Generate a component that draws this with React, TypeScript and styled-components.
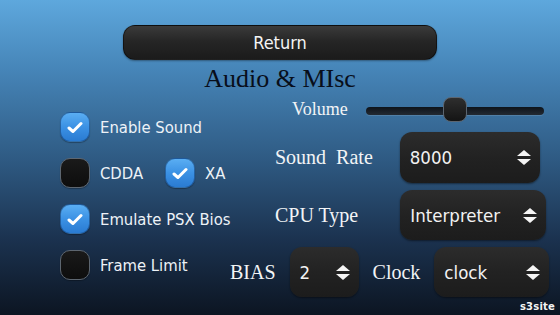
import React from "react";
import styled, { createGlobalStyle } from "styled-components";

const Global = createGlobalStyle`
  html, body { margin: 0; padding: 0; }
  body { width: 560px; height: 315px; overflow: hidden; }
`;

const SANS = `"DejaVu Sans Condensed", Roboto, "Noto Sans", sans-serif`;

const Page = styled.div`
  position: relative;
  width: 560px;
  height: 315px;
  box-sizing: border-box;
  background: linear-gradient(180deg, #5ea8dd 0%, #4685b8 22%, #2f5b84 50%, #1b324f 76%, #0c1522 100%);
  display: flex;
  flex-direction: column;
  align-items: center;
  font-family: ${SANS};
  color: #eef3f8;
  overflow: hidden;
`;

const ReturnButton = styled.button`
  margin-top: 25px;
  width: 314px;
  height: 35px;
  border-radius: 12px;
  border: 1px solid rgba(0, 0, 0, 0.45);
  background: linear-gradient(180deg, #3b3b3b 0%, #262626 45%, #1b1b1b 100%);
  box-shadow: 0 1px 2px rgba(0, 0, 0, 0.35);
  color: #f4f4f4;
  font-family: ${SANS};
  font-size: 18px;
  padding: 0;
  cursor: pointer;
`;

const Title = styled.h1`
  margin: 4px 0 0;
  height: 30px;
  line-height: 30px;
  font-family: "Liberation Serif", "Times New Roman", serif;
  font-weight: normal;
  font-size: 26px;
  color: #080e1a;
`;

const Body = styled.div`
  align-self: stretch;
  display: grid;
  grid-template-columns: 230px 1fr;
`;

const LeftCol = styled.div`
  padding: 18px 0 0 60px;
  display: flex;
  flex-direction: column;
  gap: 16px;
`;

const CheckRow = styled.div`
  display: flex;
  align-items: center;
  height: 30px;
  gap: 22px;
`;

const CheckItem = styled.label`
  display: flex;
  align-items: center;
  gap: 10px;
  font-size: 16.5px;
  color: #edf2f7;
  white-space: nowrap;
`;

const Box = styled.span<{ $checked: boolean }>`
  width: 30px;
  height: 30px;
  box-sizing: border-box;
  border-radius: 10px;
  display: flex;
  align-items: center;
  justify-content: center;
  flex: none;
  background: ${(p) =>
    p.$checked
      ? "linear-gradient(180deg, #5aaef3 0%, #3b91e4 50%, #2a7bd2 100%)"
      : "linear-gradient(180deg, #1a1a1a 0%, #0d0d0d 100%)"};
  border: 1px solid ${(p) => (p.$checked ? "rgba(20,60,110,0.55)" : "#5d6670")};
  box-shadow: 0 1px 1px rgba(0, 0, 0, 0.3);
`;

const RightCol = styled.div`
  display: flex;
  flex-direction: column;
`;

const VolumeRow = styled.div`
  margin-top: 3px;
  height: 25px;
  padding-left: 62px;
  display: flex;
  align-items: center;
`;

const SerifLabel = styled.span<{ $size?: number }>`
  font-family: "Liberation Serif", "Times New Roman", serif;
  font-size: ${(p) => p.$size ?? 20}px;
  color: #f2f4f6;
  white-space: pre;
`;

const Track = styled.div`
  position: relative;
  margin-left: 18px;
  width: 178px;
  height: 8px;
  margin-top: 3px;
  border-radius: 4px;
  background: linear-gradient(180deg, #0e141b 0%, #232a33 100%);
  box-shadow: 0 1px 0 rgba(255, 255, 255, 0.12);
`;

const Thumb = styled.div`
  position: absolute;
  top: 50%;
  width: 24px;
  height: 25px;
  box-sizing: border-box;
  transform: translate(-50%, -56%);
  border-radius: 8px;
  background: linear-gradient(180deg, #2e2e2e 0%, #141414 100%);
  border: 1px solid #5b6570;
`;

const SelectRow = styled.div<{ $top: number; $indent: number }>`
  margin-top: ${(p) => p.$top}px;
  padding-left: ${(p) => p.$indent}px;
  display: flex;
  align-items: center;
  gap: 14px;
`;

const Select = styled.div<{ $w: number; $h: number; $ml?: number }>`
  width: ${(p) => p.$w}px;
  height: ${(p) => p.$h}px;
  margin-left: ${(p) => p.$ml ?? 0}px;
  box-sizing: border-box;
  border-radius: 12px;
  background: linear-gradient(180deg, #2c2c2c 0%, #222 50%, #1c1c1c 100%);
  box-shadow: 0 1px 2px rgba(0, 0, 0, 0.45);
  display: flex;
  align-items: center;
  justify-content: space-between;
  padding: 0 9px 0 10px;
  font-size: 18.5px;
  color: #f2f2f2;
`;

const Watermark = styled.div`
  position: absolute;
  right: 5px;
  bottom: 3px;
  font-family: "DejaVu Sans", Verdana, sans-serif;
  font-weight: bold;
  font-size: 10px;
  color: #f4f4f4;
  letter-spacing: 0.2px;
`;

const Check = () => (
  <svg width="16" height="13" viewBox="0 0 16 13">
    <path d="M2 7 L6 10.5 L14 2.5" fill="none" stroke="#fff" strokeWidth="3" strokeLinecap="round" strokeLinejoin="round" />
  </svg>
);

const Arrows = () => (
  <svg width="14" height="15" viewBox="0 0 14 15">
    <path d="M7 0 L14 6 L0 6 Z" fill="#f4f4f4" />
    <path d="M0 9 L14 9 L7 15 Z" fill="#f4f4f4" />
  </svg>
);

const CheckBox = ({ label, checked }: { label: string; checked: boolean }) => (
  <CheckItem>
    <Box $checked={checked}>{checked && <Check />}</Box>
    {label}
  </CheckItem>
);

const Dropdown = ({ value, w, h, ml }: { value: string; w: number; h: number; ml?: number }) => (
  <Select $w={w} $h={h} $ml={ml}>
    <span>{value}</span>
    <Arrows />
  </Select>
);

export default function App() {
  return (
    <>
      <Global />
      <Page>
        <ReturnButton>Return</ReturnButton>
        <Title>Audio &amp; MIsc</Title>
        <Body>
          <LeftCol>
            <CheckRow>
              <CheckBox label="Enable Sound" checked />
            </CheckRow>
            <CheckRow>
              <CheckBox label="CDDA" checked={false} />
              <CheckBox label="XA" checked />
            </CheckRow>
            <CheckRow>
              <CheckBox label="Emulate PSX Bios" checked />
            </CheckRow>
            <CheckRow>
              <CheckBox label="Frame Limit" checked={false} />
            </CheckRow>
          </LeftCol>
          <RightCol>
            <VolumeRow>
              <SerifLabel $size={18}>Volume</SerifLabel>
              <Track>
                <Thumb style={{ left: "50%" }} />
              </Track>
            </VolumeRow>
            <SelectRow $top={10} $indent={45}>
              <SerifLabel>{"Sound  Rate"}</SerifLabel>
              <Dropdown value="8000" w={140} h={51} ml={13} />
            </SelectRow>
            <SelectRow $top={7} $indent={45}>
              <SerifLabel>CPU Type</SerifLabel>
              <Dropdown value="Interpreter" w={146} h={50} ml={28} />
            </SelectRow>
            <SelectRow $top={7} $indent={0}>
              <SerifLabel>BIAS</SerifLabel>
              <Dropdown value="2" w={69} h={50} />
              <SerifLabel>Clock</SerifLabel>
              <Dropdown value="clock" w={115} h={50} />
            </SelectRow>
          </RightCol>
        </Body>
        <Watermark>s3site</Watermark>
      </Page>
    </>
  );
}
